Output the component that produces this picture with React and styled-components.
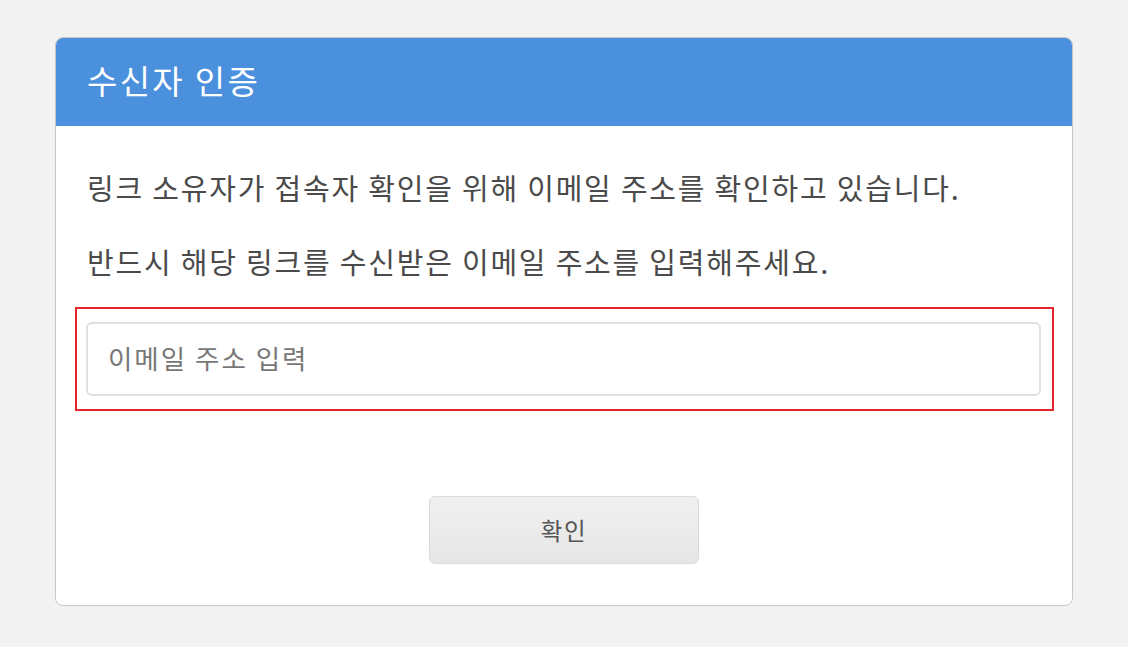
import React from "react";
import styled, { createGlobalStyle } from "styled-components";

const GlobalStyle = createGlobalStyle`
  html, body {
    margin: 0;
    padding: 0;
    background: #f2f2f2;
    font-family: "Noto Sans CJK KR", "Noto Sans", sans-serif;
  }
`;

const Page = styled.div`
  padding: 37px 0 40px;
  display: flex;
  justify-content: center;
`;

const Card = styled.div`
  width: 1018px;
  box-sizing: border-box;
  background: #fff;
  border: 1px solid #c6c6c6;
  border-radius: 8px;
  overflow: hidden;
`;

const Header = styled.div`
  height: 88px;
  box-sizing: border-box;
  background: #4a90dc;
  color: #fff;
  font-size: 33px;
  letter-spacing: 0.07em;
  display: flex;
  align-items: center;
  padding: 0 31px 4px;
`;

const Body = styled.div`
  padding: 41px 31px 41px;
  display: flex;
  flex-direction: column;
`;

const Text = styled.p`
  margin: 0 0 ${(p) => p.$gap || 0}px;
  font-size: 29px;
  letter-spacing: 0.062em;
  line-height: 40px;
  color: #4a4a4a;
`;

const Highlight = styled.div`
  margin: 26px -13px 0 -12px;
  padding: 13px 11px 13px 9px;
  border: 2px solid #e3242b;
`;

const EmailInput = styled.input`
  width: 100%;
  box-sizing: border-box;
  height: 74px;
  border: 2px solid #e0e0e0;
  border-radius: 6px;
  padding: 0 20px 4px;
  font-family: inherit;
  font-size: 26.5px;
  letter-spacing: 0.075em;
  color: #444;
  outline: none;

  &::placeholder {
    color: #777;
  }
`;

const Actions = styled.div`
  display: flex;
  justify-content: center;
  margin-top: 85px;
`;

const Button = styled.button`
  width: 270px;
  height: 68px;
  border: 1px solid #dcdcdc;
  border-radius: 6px;
  background: linear-gradient(#f0f0f0, #e6e6e6);
  font-family: inherit;
  font-size: 23.5px;
  letter-spacing: 0.07em;
  color: #555;
  padding-bottom: 2px;
  cursor: pointer;
`;

function App() {
  return (
    <>
      <GlobalStyle />
      <Page>
        <Card>
          <Header>수신자 인증</Header>
          <Body>
            <Text $gap={34}>
              링크 소유자가 접속자 확인을 위해 이메일 주소를 확인하고 있습니다.
            </Text>
            <Text>반드시 해당 링크를 수신받은 이메일 주소를 입력해주세요.</Text>
            <Highlight>
              <EmailInput type="email" placeholder="이메일 주소 입력" />
            </Highlight>
            <Actions>
              <Button>확인</Button>
            </Actions>
          </Body>
        </Card>
      </Page>
    </>
  );
}

export default App;
